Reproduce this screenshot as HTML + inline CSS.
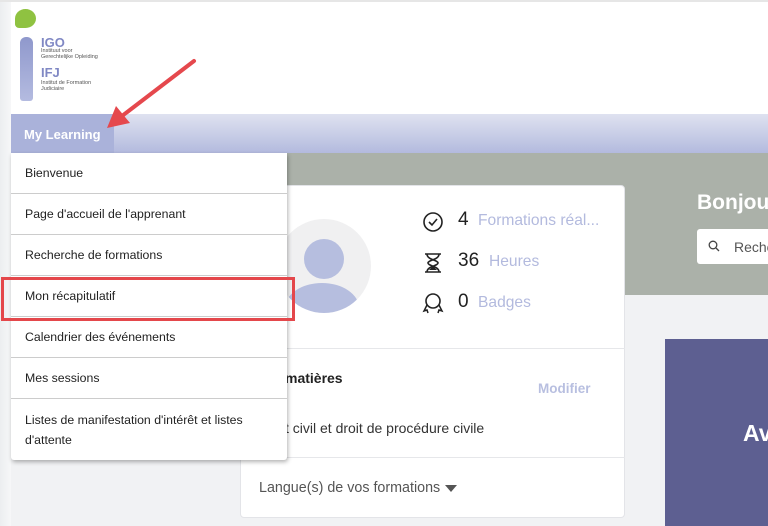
<!DOCTYPE html>
<html><head><meta charset="utf-8"><style>
*{margin:0;padding:0;box-sizing:border-box}
body{width:768px;height:526px;overflow:hidden;position:relative;background:#fff;font-family:"Liberation Sans",sans-serif}
.abs{position:absolute}
</style></head><body>
<div class="abs" style="left:0;top:0;width:11px;height:526px;background:linear-gradient(90deg,#eceef0,#f6f7f8)"></div>
<div class="abs" style="left:0;top:0;width:768px;height:2px;background:#e6e6e6"></div>
<!-- logo -->
<div class="abs" style="left:15px;top:9px;width:21px;height:19px;border-radius:50% 50% 50% 20%;background:#8fc241"></div>
<div class="abs" style="left:20px;top:37px;width:13px;height:64px;border-radius:6px 6px 3px 3px;background:linear-gradient(180deg,#8f98cc,#b4bbe0)"></div>
<div class="abs" style="left:41px;top:35px;font-size:13px;font-weight:bold;color:#8088c4">IGO</div>
<div class="abs" style="left:41px;top:48px;font-size:5.5px;line-height:6px;color:#555">Instituut voor<br>Gerechtelijke Opleiding</div>
<div class="abs" style="left:41px;top:65px;font-size:13px;font-weight:bold;color:#8088c4">IFJ</div>
<div class="abs" style="left:41px;top:80px;font-size:5.5px;line-height:6px;color:#555">Institut de Formation<br>Judiciaire</div>
<!-- nav -->
<div class="abs" style="left:11px;top:114px;width:757px;height:39px;background:linear-gradient(180deg,#dfe2f0,#b3bade)"></div>
<div class="abs" style="left:11px;top:114px;width:103px;height:39px;background:#aab2da"></div>
<div class="abs" style="left:24px;top:127px;font-size:13px;color:#fff;font-weight:bold">My Learning</div>
<!-- hero -->
<div class="abs" style="left:287px;top:153px;width:481px;height:142px;background:#abb1a9"></div>
<div class="abs" style="left:11px;top:295px;width:757px;height:231px;background:#f1f2f4"></div>
<div class="abs" style="left:697px;top:191px;font-size:21px;font-weight:bold;color:#fff">Bonjou</div>
<div class="abs" style="left:697px;top:229px;width:80px;height:35px;background:#fff;border-radius:3px"></div>
<svg class="abs" style="left:708px;top:240px" width="12" height="12" viewBox="0 0 12 12"><circle cx="5" cy="5" r="3.8" fill="none" stroke="#444" stroke-width="1.3"/><path d="M8 8l3 3" stroke="#444" stroke-width="1.3"/></svg>
<div class="abs" style="left:734px;top:239px;font-size:14px;color:#555">Reche</div>
<div class="abs" style="left:665px;top:339px;width:103px;height:187px;background:#5d5f91"></div>
<div class="abs" style="left:743px;top:420px;font-size:23px;font-weight:bold;color:#fff">Av</div>
<!-- card -->
<div class="abs" style="left:240px;top:185px;width:385px;height:333px;background:#fff;border:1px solid #e3e4e8;border-radius:4px"></div>
<div class="abs" style="left:240px;top:348px;width:385px;height:1px;background:#e6e7ea"></div>
<div class="abs" style="left:240px;top:457px;width:385px;height:1px;background:#e6e7ea"></div>
<div class="abs" style="left:277px;top:219px;width:94px;height:94px;border-radius:50%;background:#f0f0f1;overflow:hidden">
 <div class="abs" style="left:27px;top:20px;width:40px;height:40px;border-radius:50%;background:#b6bedf"></div>
 <div class="abs" style="left:8px;top:64px;width:74px;height:50px;border-radius:50%;background:#b6bedf"></div>
</div>
<svg class="abs" style="left:422px;top:211px" width="22" height="22" viewBox="0 0 22 22"><circle cx="11" cy="11" r="9" fill="none" stroke="#222" stroke-width="1.6"/><path d="M7 11l3 3 5-6" fill="none" stroke="#222" stroke-width="1.6"/></svg>
<svg class="abs" style="left:422px;top:252px" width="22" height="22" viewBox="0 0 22 22"><path d="M3 2h16M3 20h16M5 2c0 6 11 6 11 9S5 14 5 20M17 2c0 6-11 6-11 9s11 3 11 9" fill="none" stroke="#222" stroke-width="1.6"/><path d="M7 18l4-4 4 4z" fill="#222"/></svg>
<svg class="abs" style="left:422px;top:292px" width="22" height="22" viewBox="0 0 22 22"><circle cx="11" cy="9" r="7" fill="none" stroke="#222" stroke-width="1.6"/><path d="M5 13l-3 6 3-1 1 3M17 13l3 6-3-1-1 3" fill="none" stroke="#222" stroke-width="1.5"/></svg>
<div class="abs" style="left:458px;top:209px;font-size:19px;color:#222">4</div>
<div class="abs" style="left:478px;top:212px;font-size:15.6px;color:#b3bade">Formations réal...</div>
<div class="abs" style="left:458px;top:250px;font-size:19px;color:#222">36</div>
<div class="abs" style="left:489px;top:253px;font-size:15.6px;color:#b3bade">Heures</div>
<div class="abs" style="left:458px;top:291px;font-size:19px;color:#222">0</div>
<div class="abs" style="left:478px;top:294px;font-size:15.6px;color:#b3bade">Badges</div>
<div class="abs" style="left:285px;top:370px;font-size:14px;font-weight:bold;color:#222">matières</div>
<div class="abs" style="left:538px;top:381px;font-size:13.5px;font-weight:bold;color:#b8bfe0">Modifier</div>
<div class="abs" style="left:285px;top:420px;font-size:14px;color:#333">t civil et droit de procédure civile</div>
<div class="abs" style="left:259px;top:480px;font-size:14.3px;color:#555">Langue(s) de vos formations</div>
<div class="abs" style="left:445px;top:485px;border-left:6px solid transparent;border-right:6px solid transparent;border-top:7px solid #555"></div>
<!-- dropdown -->
<div class="abs" style="left:11px;top:153px;width:276px;height:307px;background:#fff;box-shadow:1px 2px 4px rgba(0,0,0,.3);border-radius:0 0 3px 3px;font-size:12.3px;color:#222">
 <div style="height:41px;border-bottom:1px solid #ccc;padding:13px 14px">Bienvenue</div>
 <div style="height:41px;border-bottom:1px solid #ccc;padding:13px 14px">Page d'accueil de l'apprenant</div>
 <div style="height:41px;border-bottom:1px solid #ccc;padding:13px 14px">Recherche de formations</div>
 <div style="height:41px;border-bottom:1px solid #ccc;padding:13px 14px">Mon récapitulatif</div>
 <div style="height:41px;border-bottom:1px solid #ccc;padding:13px 14px">Calendrier des événements</div>
 <div style="height:41px;border-bottom:1px solid #ccc;padding:13px 14px">Mes sessions</div>
 <div style="padding:11px 14px;line-height:20px">Listes de manifestation d'intérêt et listes d'attente</div>
</div>
<div class="abs" style="left:1px;top:277px;width:294px;height:44px;border:3px solid #e4474b"></div>
<!-- arrow -->
<svg class="abs" style="left:0;top:0" width="300" height="160"><path d="M194 61L122 116" stroke="#e5484d" stroke-width="4" stroke-linecap="round"/><path d="M107 128l9-22 14 17z" fill="#e5484d"/></svg>
</body></html>
